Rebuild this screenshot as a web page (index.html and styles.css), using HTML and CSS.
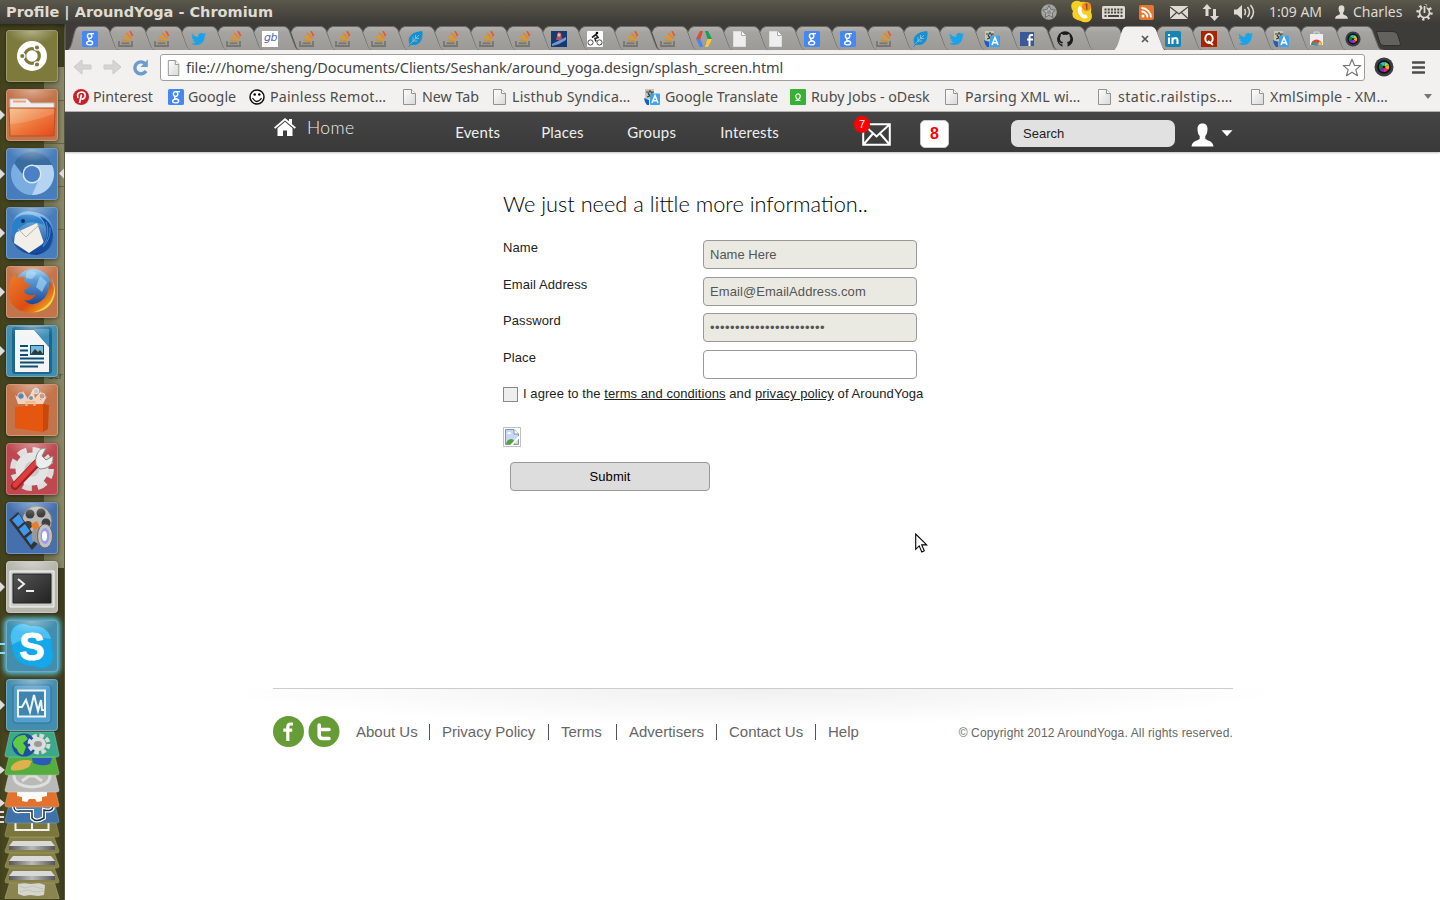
FILE: index.html
```html
<!DOCTYPE html>
<html lang="en">
<head>
<meta charset="utf-8">
<title>Profile | AroundYoga</title>
<link rel="stylesheet" href="styles.css">
</head>
<body>
<svg class="defs" aria-hidden="true">
  <defs>
    <linearGradient id="gTab" x1="0" y1="0" x2="0" y2="1"><stop offset="0" stop-color="#b3b2af"/><stop offset=".25" stop-color="#a5a4a1"/><stop offset="1" stop-color="#9b9a97"/></linearGradient>
    <linearGradient id="gPage" x1="0" y1="0" x2="1" y2="1"><stop offset="0" stop-color="#fff"/><stop offset="1" stop-color="#d8d8d8"/></linearGradient>
    <linearGradient id="gFolder" x1="0" y1="0" x2="1" y2="1"><stop offset="0" stop-color="#f6bd84"/><stop offset=".5" stop-color="#ee7a3c"/><stop offset="1" stop-color="#e6471a"/></linearGradient>
    <linearGradient id="gBlue" x1="0" y1="0" x2="0" y2="1"><stop offset="0" stop-color="#7fc0f0"/><stop offset="1" stop-color="#103f8e"/></linearGradient>
    <linearGradient id="gFox" x1="0" y1="0" x2="1" y2="1"><stop offset="0" stop-color="#ef7d2c"/><stop offset=".6" stop-color="#d94e12"/><stop offset="1" stop-color="#f8c52c"/></linearGradient>
    <linearGradient id="gDrive" x1="0" y1="0" x2="1" y2="0"><stop offset="0" stop-color="#555"/><stop offset=".5" stop-color="#bbb"/><stop offset="1" stop-color="#555"/></linearGradient>
    <linearGradient id="gTerm" x1="0" y1="0" x2="1" y2="1"><stop offset="0" stop-color="#555"/><stop offset="1" stop-color="#222"/></linearGradient>
  </defs>
  <symbol id="tabFirst" viewBox="0 0 54 24"><path d="M0 24C5 21 5 5 9 1.5Q10 .5 12 .5H36Q39 .5 41 4L47 20Q48 24 52 24Z" fill="url(#gTab)"/><path d="M0 24C5 21 5 5 9 1.5Q10 .5 12 .5H36Q39 .5 41 4L47 20Q48 24 52 24" fill="none" stroke="#6b6a67"/></symbol>
  <symbol id="tabMid" viewBox="0 0 54 24"><path d="M16 24Q12 24 11 20L6 6Q8 .5 12 .5H36Q39 .5 41 4L47 20Q48 24 52 24Z" fill="url(#gTab)"/><path d="M6 6Q8 .5 12 .5H36Q39 .5 41 4L47 20Q48 24 52 24" fill="none" stroke="#6b6a67"/></symbol>
  <symbol id="tabOn" viewBox="0 0 54 25"><path d="M-2 25C5 21 5 5 9 1.5Q10 .5 12 .5H36Q39 .5 41 4L47 20Q48 25 53 25Z" fill="#f2f1f0"/></symbol>
  <symbol id="so" viewBox="0 0 16 16"><path d="M1 10v5h13v-5" fill="none" stroke="#777672" stroke-width="1.8"/><path d="M3.5 12.3h8" stroke="#777672" stroke-width="1.8"/><path d="M4 9.2l8 1.2" stroke="#c5923d" stroke-width="1.8"/><path d="M5 5.3l7.2 3.6" stroke="#e6951c" stroke-width="1.8"/><path d="M8 1.8l5.4 5.6" stroke="#ef8220" stroke-width="1.8"/><path d="M12 0l2.7 5" stroke="#e8562a" stroke-width="1.6"/></symbol>
  <symbol id="goog" viewBox="0 0 16 16"><rect width="16" height="16" rx="1.5" fill="#4787f3"/><g fill="none" stroke="#fff" stroke-width="1.4"><ellipse cx="7.6" cy="5" rx="2.2" ry="2.4"/><path d="M8 2.6h4M7.5 7.6q-2 1.3.5 2.2 3 .8 2.6 2.6-.6 1.6-3.2 1.500-2.700-.2-2.800-1.600 0-2 3.400-2.200"/></g></symbol>
  <symbol id="bird" viewBox="0 0 16 16"><path d="M2 2.800c2 2.200 4 3.200 6.200 3.300-.4-2.500 1-4.200 3-4.200 1 0 1.700.3 2.300.9l2-.7-.9 1.700 1.600-.4-1.500 1.600C14.700 9.800 11.800 13.800 7 13.900c-2.200 0-4-.5-5.600-1.500 1.800.1 3.400-.4 4.600-1.300-1.500-.1-2.600-1-3-2.200h1.300C2.800 8.300 1.900 7.200 1.900 5.700l1.300.4C1.900 5 1.400 4 2 2.800z" fill="#1ba3e8"/></symbol>
  <symbol id="leaf" viewBox="0 0 16 16"><path d="M3 13C0 6 5 1.500 15 .6c.6 9-3 14.500-11 12.600L1.500 15.700" fill="#1590d2" stroke="#1590d2"/><path d="M3.500 12.700L12 4M6 10V6M8.500 7.500V4M6 10h4M8.500 7.500H12" stroke="#9fc0cf" stroke-width=".8" fill="none"/></symbol>
  <symbol id="doc" viewBox="0 0 16 16"><path d="M1.500.5h8l4 4v11h-12z" fill="url(#gPage)" stroke="#929292"/><path d="M9.500.5v4h4" fill="#fff" stroke="#929292"/></symbol>
  <symbol id="docTab" viewBox="0 0 16 16"><path d="M1.500.5h8l4 4v11h-12z" fill="#eee" stroke="#ddd"/><path d="M9.500.5v4h4" fill="#fff" stroke="#aaa"/></symbol>
  <symbol id="trans" viewBox="0 0 16 16"><rect x="1" y="0" width="9" height="10" fill="#c9c7b4"/><path d="M2 3h8M6 1v2M3 8q5-1 5-5M4 4q1 3 5 4" stroke="#3a3a38" stroke-width="1.200" fill="none"/><path d="M0 9l5 2v5H3l-2-3z" fill="#1660c4"/><rect x="6" y="4.500" width="10" height="11.500" rx="1" fill="#3fa2ea"/><path d="M8 14l3-7.500 3 7.500M9 11.700h4" stroke="#fff" stroke-width="1.500" fill="none"/></symbol>
  <symbol id="cam" viewBox="0 0 20 20"><circle cx="10" cy="10" r="9.500" fill="#3a3d43"/><circle cx="10" cy="10" r="6.800" fill="#111"/><path d="M10 10L6 6.500Q8 4.500 11 5z" fill="#20c0e8"/><path d="M10 10l1-5q3 1 4 3z" fill="#8be02e"/><path d="M10 10l5-2q1 3-1 5z" fill="#f6a51e"/><path d="M10 10l4 3q-2 2.500-4 2z" fill="#e2267b"/><path d="M10 10v5q-3 0-4.500-2z" fill="#7a2bd0"/><path d="M10 10l-4.500 3Q4 9 6 6.500z" fill="#17803c"/><circle cx="10" cy="10" r="1.300" fill="#181818"/></symbol>
  <symbol id="person" viewBox="0 0 22 24"><path d="M6 6C6 2 8 .5 11 .5S16 2 16 6c0 4-1.200 6-2.200 7v3c2.500 1.800 7.700 2 8.200 7.500H0c.5-5.500 5.700-5.700 8.200-7.500v-3C7.200 12 6 10 6 6z" fill="currentColor"/></symbol>
</svg>

<header class="panel">
  <span class="panel-title">Profile | AroundYoga - Chromium</span>
  <div class="tray">
    <svg class="t-star" width="16" height="16" viewBox="0 0 16 16"><circle cx="8" cy="8" r="7.800" fill="#a3a3a1"/><path d="M8 1.500l2 4 4.300.6-3.200 3 .9 4.400-4-2.200-4 2.200.9-4.400-3.200-3L6 5.500z" fill="#b5b5b3" stroke="#666" stroke-width=".9"/><circle cx="8" cy="8.300" r="2.200" fill="#8f8f8d"/></svg>
    <svg class="t-skype" width="24" height="24" viewBox="0 0 24 24"><path d="M2 3Q6-1 11 2q12-2 10 10 3 7-3 10-5 1-7-1Q0 19 3 11 0 7 2 3z" fill="#f7cf20"/><path d="M11 7q-3 3 0 7 2 4 6 2" stroke="#fff" stroke-width="3.600" fill="none"/><circle cx="16.500" cy="6.500" r="4.500" fill="#f18b1c"/><path d="M15.500 5l1.300-1v5.500" stroke="#633" fill="none"/></svg>
    <svg class="t-key" width="23" height="13" viewBox="0 0 23 13"><rect width="23" height="13" rx="1.500" fill="#dfdbd2"/><path d="M2.500 3.500h18M2.500 6.500h18" stroke="#45443e" stroke-width="2" stroke-dasharray="2 1.200"/><path d="M2.500 10h2M6 10h11M18.500 10h2" stroke="#45443e" stroke-width="1.800"/></svg>
    <svg class="t-rss" width="15" height="15" viewBox="0 0 15 15"><rect width="15" height="15" rx="2" fill="#e8762c"/><circle cx="4" cy="11" r="1.500" fill="#fff"/><path d="M2.500 6.500a6 6 0 0 1 6 6M2.500 3a9.500 9.500 0 0 1 9.500 9.500" fill="none" stroke="#fff" stroke-width="1.800"/></svg>
    <svg class="t-mail" width="18" height="13" viewBox="0 0 18 13"><rect width="18" height="13" fill="#dfdbd2"/><path d="M0 1l9 7 9-7M0 12.500L6.500 6.500M18 12.500L11.500 6.500" fill="none" stroke="#45443e" stroke-width="1.200"/></svg>
    <svg class="t-net" width="18" height="17" viewBox="0 0 18 17"><path d="M5 0l4.500 5H6.500v7h-3V5H.5zM12.500 17L8 12h3V5h3v7h3z" fill="#dfdbd2"/></svg>
    <svg class="t-vol" width="21" height="16" viewBox="0 0 21 16"><path d="M0 5.500h3L8 1v14l-5-4.500H0z" fill="#dfdbd2"/><path d="M10.500 5q2 3 0 6M13.500 3q4 5 0 10M16.500 1q6 7 0 14" fill="none" stroke="#dfdbd2" stroke-width="1.500"/></svg>
    <span class="clock">1:09 AM</span>
    <svg class="t-user" width="13" height="14"><use href="#person"/></svg>
    <span class="user">Charles</span>
    <svg class="t-gear" width="17" height="17" viewBox="0 0 17 17"><circle cx="8.500" cy="8.500" r="6.800" fill="none" stroke="#dfdbd2" stroke-width="2.800" stroke-dasharray="2.200 3.140"/><circle cx="8.500" cy="8.500" r="5" fill="none" stroke="#dfdbd2" stroke-width="1.700"/><path d="M8.500 1v8" stroke="#45443e" stroke-width="4"/><path d="M8.500 2v7" stroke="#dfdbd2" stroke-width="1.800"/></svg>
  </div>
</header>

<div class="desk">
  <aside class="dock">
    <div class="ghost"><i></i><i></i><i></i><i></i><b>Scr</b></div>
    <ul class="tiles">
      <li class="tile olive"><svg viewBox="0 0 52 52"><circle cx="26" cy="26" r="15" fill="#fff"/><circle cx="26" cy="26" r="7.300" fill="none" stroke="#7d7a3c" stroke-width="3.200"/><g stroke="#fff" stroke-width="1.200" fill="#7d7a3c"><circle cx="16.300" cy="26" r="2.700"/><circle cx="31" cy="17.500" r="2.700"/><circle cx="31" cy="34.500" r="2.700"/></g></svg></li>
      <li class="tile orange run"><svg viewBox="0 0 52 52"><path d="M4 10h17l4 4h23v9H4z" fill="#eee" stroke="#c9c0b8"/><path d="M7 12.500h13" stroke="#f0a070" stroke-width="2"/><path d="M3 19h46l-1 28H4z" fill="url(#gFolder)" stroke="#b5522a"/><path d="M4 35Q22 34 48 25V20H4z" fill="#fff" opacity=".15"/></svg></li>
      <li class="tile blue run focus"><svg viewBox="0 0 52 52"><circle cx="26" cy="26" r="21" fill="#7aaee0"/><path d="M26 17h20A21 21 0 0 0 8 15l9 12z" fill="#3a6c9f"/><path d="M26 17h20a21 21 0 0 1-20 30l8-18z" fill="#b4d4f1"/><circle cx="26" cy="26" r="9.500" fill="#dbe9f7"/><circle cx="26" cy="26" r="8" fill="#4a80c6"/><path d="M58 20.500v10L53 25.500z" fill="#ddd"/></svg></li>
      <li class="tile blue run"><svg viewBox="0 0 52 52"><path d="M8 12Q14 2 28 5 46 8 48 26 48 44 31 48 10 47 5 31 4 20 8 12z" fill="url(#gBlue)"/><path d="M9 26l22-10 7 20-15 10-15-10z" fill="#f1efe8"/><path d="M12 22l8 8 13-12" fill="none" stroke="#b9b3a4"/><path d="M8 13q10-9 24-3 5 3 6 8-9-4-17-2l-9 6-4 8q-5-9 0-17z" fill="#2b7ec9"/><path d="M34 9q10 12 5 24-5 9-14 13 21 1 22-19Q46 14 34 9z" fill="#174b9d"/><path d="M40 15q5 12-3 24M44 20q1 12-7 20" fill="none" stroke="#3f8fd8"/><circle cx="17" cy="14" r="2" fill="#183152"/></svg></li>
      <li class="tile orange run"><svg viewBox="0 0 52 52"><circle cx="27" cy="22" r="19" fill="url(#gBlue)"/><path d="M20 7q5-4 11 0l-5 6-6-1zM34 10l7 6-5 10-6-5z" fill="#9dd3f2" opacity=".7"/><path d="M4 18q1-7 5-10 0 3 2 4 5-2 8-1l-1 5 7 3-5 4q-3 1-1 4 5 4 11 1-4 8-12 6 8 8 17 1 9-6 8-20 6 6 3 16-5 15-19 16Q8 46 4 34 1 26 4 18z" fill="url(#gFox)"/><path d="M45 11q6 12 0 23-6 9-17 12 18-1 21-19 0-9-4-16z" fill="#f9d442"/></svg></li>
      <li class="tile teal run"><svg viewBox="0 0 52 52"><rect x="6" y="2" width="40" height="47" rx="3" fill="#1c6790"/><path d="M9 5h19l15 17v25H9z" fill="#f2f4f5"/><path d="M28 4l15 18V4z" fill="#3f8fb8"/><path d="M14 21h8M14 25.500h8M14 30h8M14 33.500h24M14 37.500h24M14 41.500h18" stroke="#0d4d72" stroke-width="2"/><rect x="24.500" y="20.500" width="13" height="9" fill="#79b9dc" stroke="#0d4d72"/><path d="M25 29l4-5 3 3 2-2 3 4z" fill="#2b3d33"/></svg></li>
      <li class="tile orange"><svg viewBox="0 0 52 52"><path d="M12 20L9 11l6 5 2-9 5 8 5-10 2 9 6-7-1 9 7-4-4 8z" fill="#fbe0cc" opacity=".85"/><g stroke="#eee" stroke-width=".8"><circle cx="15" cy="12" r="3.300" fill="#5b83ad"/><circle cx="30" cy="7" r="2.800" fill="#b9bcbe"/><circle cx="36" cy="12" r="3" fill="#c9987f"/><circle cx="25" cy="14" r="2.500" fill="#7c8e9b"/></g><path d="M9 23l28-3v28l-28-4z" fill="#e5560f"/><path d="M37 20l6 1-1 24-5 3z" fill="#c8480c"/><path d="M20.500 22v-4h8v4" fill="none" stroke="#f7b888" stroke-width="2"/></svg></li>
      <li class="tile red"><svg viewBox="0 0 52 52"><circle cx="26" cy="26" r="19" fill="none" stroke="#dcdcdc" stroke-width="6" stroke-dasharray="9 5.920"/><circle cx="26" cy="26" r="12" fill="#c9c9c9" stroke="#e4e4e4" stroke-width="9"/><path d="M9 43l22-23" stroke="#a81e20" stroke-width="8" stroke-linecap="round"/><path d="M9 42l21-22" stroke="#dc3e3f" stroke-width="5" stroke-linecap="round"/><path d="M30 22q-2-10 5-16l5-1-4 8 4 4 7-4q1 9-7 12-4 1-6 1z" fill="#ededed" stroke="#888"/></svg></li>
      <li class="tile indigo"><svg viewBox="0 0 52 52"><circle cx="31" cy="19" r="15" fill="#b9b9b7" stroke="#777"/><g fill="#3f3f3f"><circle cx="24" cy="12" r="4.500"/><circle cx="35" cy="11" r="4.500"/><circle cx="40" cy="21" r="4.500"/><circle cx="22" cy="23" r="4"/></g><path d="M3 18l9-8 21 30-7 8z" fill="#333"/><path d="M6 18l7-6 5 8-6 5zM13 27l6-5 5 7-6 5zM20 36l6-5 4 6-5 6z" fill="#3f97ec"/><path d="M25 22l6-3 3 7-6 3z" fill="#ef7b27"/><path d="M26 29l11-6v22l-11-7z" fill="#999"/><ellipse cx="39" cy="34" rx="7.500" ry="12" fill="#c2c2c2" stroke="#666"/><ellipse cx="39" cy="34" rx="4.500" ry="8" fill="#9a9ae8"/><ellipse cx="38.500" cy="34" rx="2.500" ry="5" fill="#fff"/></svg></li>
      <li class="tile grey run"><svg viewBox="0 0 52 52"><path d="M4 10h44v36H4z" fill="#ccc" stroke="#f7f7f7"/><path d="M7 13h38v29H7z" fill="url(#gTerm)" stroke="#222"/><path d="M12 18l6 5-6 5M20 30h8" fill="none" stroke="#eee" stroke-width="2"/></svg></li>
      <li class="tile teal glow run2"><svg viewBox="0 0 52 52"><path d="M6 8Q14 0 24 6 46 4 46 28 50 44 38 48 32 48 29 46 6 46 6 24 3 15 6 8z" fill="#12a8ea"/><path d="M7 9Q14 1 24 6 42 5 45 19 22 14 6 25 3 15 7 9z" fill="#6fd0f6" opacity=".6"/><text x="26" y="40" class="skype-s">S</text></svg></li>
      <li class="tile teal run"><svg viewBox="0 0 52 52"><rect x="7" y="6" width="38" height="38" rx="3" fill="#569fcc" stroke="#2c7098"/><rect x="12" y="11.500" width="27" height="26" fill="#3f85af" stroke="#eaf6fc" stroke-width="2"/><path d="M13 28h3l4-7 4 12 4-17 4 16 3-11 1 10h3" fill="none" stroke="#eaf6fc" stroke-width="2"/></svg></li>
    </ul>
    <svg class="folded" width="65" height="168" viewBox="0 0 65 168">
      <g stroke-opacity=".5">
        <path d="M10 150.500h44l5 16q0 2-2 2H7q-2 0-2-2z" fill="#8a8450" stroke="#b5b080"/>
        <path d="M18 153l6-1 7 1 8-1 6 2-1 10-6 1-8-1-6 1-6-2z" fill="#d5d5cd"/><path d="M19 155l6 2 8-2 10 3M20 161l8-2 7 2 9-1" fill="none" stroke="#b0afa2"/>
        <path d="M10 136h44l5 14q0 2-2 2H7q-2 0-2-2z" fill="#85804a" stroke="#a9a46e"/>
        <path d="M10 121h44l5 14q0 2-2 2H7q-2 0-2-2z" fill="#85804a" stroke="#a9a46e"/>
        <path d="M10 106h44l5 14q0 2-2 2H7q-2 0-2-2z" fill="#85804a" stroke="#a9a46e"/>
        <path d="M10 84h44l5 20q0 2-2 2H7q-2 0-2-2z" fill="#7b763c" stroke="#a9a46e"/>
        <path d="M15.500 89v10h33V89M32 89v9" fill="none" stroke="#fff" stroke-width="2" stroke-opacity=".9"/>
        <path d="M10 70h44l5 20q0 2-2 2H7q-2 0-2-2z" fill="#3e72a8" stroke="#7ba0c6"/>
        <path d="M14 76q0 5 6 4l12 0v7q4 5 12 0v-8q8 2 9-3" fill="#4c82b8" stroke="#fff" stroke-width="4" stroke-opacity="1"/><path d="M14 76q0 5 6 4l12 0v7q4 5 12 0v-8q8 2 9-3" fill="none" stroke="#17334f" stroke-width="1.500" stroke-opacity="1"/>
        <path d="M10 54h44l5 20q0 2-2 2H7q-2 0-2-2z" fill="#e2722c" stroke="#f2a878"/>
        <path d="M17 60h30v5l-5 1v4l-5 1-2-3h-6l-2 3-5-1v-4l-5-1z" fill="#fff"/>
        <path d="M10 38h44l5 21q0 2-2 2H7q-2 0-2-2z" fill="#b9b9b7" stroke="#ddd"/>
        <path d="M14 43q-1 12 18 13 19-1 18-13M22 50l7-5h6l7 5" fill="none" stroke="#dedede" stroke-width="3" stroke-opacity="1"/>
        <path d="M10 22h44l5 20q0 2-2 2H7q-2 0-2-2z" fill="#54ad3e" stroke="#94d084"/>
        <path d="M11 36q5-8 17-7l4 1-3 6q-10 5-18 3z" fill="#e0b04a"/><path d="M32 27h20l-2 6q-8 3-17-1z" fill="#2b59b8"/>
        <path d="M10 1h44l5 23q0 2-2 2H7q-2 0-2-2z" fill="#3ba889" stroke="#84d4bc"/>
      </g>
      <ellipse cx="24" cy="14" rx="12" ry="11.500" fill="#1c4f9c"/><path d="M13 11q4-8 12-7l3 4-5 4 3 4-3 8q-5-1-6-6-4-2-4-7z" fill="#5ecb42"/>
      <ellipse cx="39" cy="13" rx="9.500" ry="8.500" fill="none" stroke="#dadada" stroke-width="4" stroke-dasharray="4.500 2.600"/><ellipse cx="38" cy="13" rx="6" ry="5" fill="#999" stroke="#dcdcdc" stroke-width="4"/>
      <g id="drive"><path d="M13 110h38l4 5H9z" fill="#d9d9d7"/><path d="M9 115h46v4H9z" fill="url(#gDrive)"/></g>
      <use href="#drive" y="15"/><use href="#drive" y="30"/>
      <path d="M0 35l5 4-5 4zM0 68l5 4-5 4z" fill="#ddd"/><path d="M0 81h4M0 86h4M0 91h4" stroke="#ddd" stroke-width="2"/>
    </svg>
  </aside>

  <section class="browser">
    <ol class="tabs">
      <li class="tab"><svg class="shape"><use href="#tabFirst"/></svg><svg class="fav"><use href="#goog"/></svg></li>
      <li class="tab"><svg class="shape"><use href="#tabMid"/></svg><svg class="fav"><use href="#so"/></svg></li>
      <li class="tab"><svg class="shape"><use href="#tabMid"/></svg><svg class="fav"><use href="#so"/></svg></li>
      <li class="tab"><svg class="shape"><use href="#tabMid"/></svg><svg class="fav"><use href="#bird"/></svg></li>
      <li class="tab"><svg class="shape"><use href="#tabMid"/></svg><svg class="fav"><use href="#so"/></svg></li>
      <li class="tab"><svg class="shape"><use href="#tabMid"/></svg><span class="fav gb">gb</span></li>
      <li class="tab"><svg class="shape"><use href="#tabMid"/></svg><svg class="fav"><use href="#so"/></svg></li>
      <li class="tab"><svg class="shape"><use href="#tabMid"/></svg><svg class="fav"><use href="#so"/></svg></li>
      <li class="tab"><svg class="shape"><use href="#tabMid"/></svg><svg class="fav"><use href="#so"/></svg></li>
      <li class="tab"><svg class="shape"><use href="#tabMid"/></svg><svg class="fav"><use href="#leaf"/></svg></li>
      <li class="tab"><svg class="shape"><use href="#tabMid"/></svg><svg class="fav"><use href="#so"/></svg></li>
      <li class="tab"><svg class="shape"><use href="#tabMid"/></svg><svg class="fav"><use href="#so"/></svg></li>
      <li class="tab"><svg class="shape"><use href="#tabMid"/></svg><svg class="fav"><use href="#so"/></svg></li>
      <li class="tab"><svg class="shape"><use href="#tabMid"/></svg><svg class="fav" viewBox="0 0 16 16"><path fill="#163a72" d="M0 0h16v16H0z"/><path d="M1 13l6-3 8-4v3l-7 4-7 2z" fill="#6f9bd0"/><path d="M5 9l2-8 3 1 1 7z" fill="#c44a55"/><circle cx="8" cy="4" r="1.700" fill="#e8b5a0"/></svg></li>
      <li class="tab"><svg class="shape"><use href="#tabMid"/></svg><svg class="fav" viewBox="0 0 16 16"><rect width="16" height="16" rx="1" fill="#fff"/><g fill="none" stroke="#222"><circle cx="3.500" cy="11.500" r="2.600" stroke-width=".8"/><circle cx="12.500" cy="11.500" r="2.600" stroke-width=".8"/><path d="M5 6.500l4-3 2 3-3 1 1 3" stroke-width="1.600"/></g><circle cx="10" cy="2" r="1.300"/></svg></li>
      <li class="tab"><svg class="shape"><use href="#tabMid"/></svg><svg class="fav"><use href="#so"/></svg></li>
      <li class="tab"><svg class="shape"><use href="#tabMid"/></svg><svg class="fav"><use href="#so"/></svg></li>
      <li class="tab"><svg class="shape"><use href="#tabMid"/></svg><svg class="fav" viewBox="0 0 16 16"><path d="M0 8l4-8h3L4.500 8z" fill="#dd4b39"/><path d="M0 8h4.500L7 16H4z" fill="#4a86e8"/><path d="M16 8h-4.500L9 0h3z" fill="#1a9f59"/><path d="M16 8l-4 8H9l2.500-8z" fill="#fbc835"/></svg></li>
      <li class="tab"><svg class="shape"><use href="#tabMid"/></svg><svg class="fav"><use href="#docTab"/></svg></li>
      <li class="tab"><svg class="shape"><use href="#tabMid"/></svg><svg class="fav"><use href="#docTab"/></svg></li>
      <li class="tab"><svg class="shape"><use href="#tabMid"/></svg><svg class="fav"><use href="#goog"/></svg></li>
      <li class="tab"><svg class="shape"><use href="#tabMid"/></svg><svg class="fav"><use href="#goog"/></svg></li>
      <li class="tab"><svg class="shape"><use href="#tabMid"/></svg><svg class="fav"><use href="#so"/></svg></li>
      <li class="tab"><svg class="shape"><use href="#tabMid"/></svg><svg class="fav"><use href="#leaf"/></svg></li>
      <li class="tab"><svg class="shape"><use href="#tabMid"/></svg><svg class="fav"><use href="#bird"/></svg></li>
      <li class="tab"><svg class="shape"><use href="#tabMid"/></svg><svg class="fav"><use href="#trans"/></svg></li>
      <li class="tab"><svg class="shape"><use href="#tabMid"/></svg><svg class="fav" viewBox="0 0 16 16"><path fill="#3b5998" d="M0 1h14v14H0z"/><path d="M9.500 15V6q0-2 2-2H13M7 8.500h6" stroke="#fff" stroke-width="2" fill="none"/></svg></li>
      <li class="tab"><svg class="shape"><use href="#tabMid"/></svg><svg class="fav" viewBox="0 0 16 16"><path d="M8 .3a7.900 7.900 0 0 0-2.500 15.400V13.400c-2 .4-2.600-1-2.900-1.700-.3-.5-1-1-1-1 1-.3 1.600.8 2 1.300.5.600 1.300.5 1.900.2.100-.5.300-.9.600-1.100C4 10.800 3 10 3 7.500c0-.9.300-1.600.8-2.200-.2-.7-.1-1.500.2-2.200 1 0 1.700.5 2.300.9a8 8 0 0 1 3.800 0c.6-.4 1.400-.9 2.300-.9.200.7.300 1.500.1 2.200.5.600.8 1.300.8 2.200 0 2.500-1.300 3.400-3.300 3.600.4.300.6.900.6 1.700v2.900A7.900 7.900 0 0 0 8 .3z" fill="#1b1b1b"/></svg></li>
      <li class="tab"><svg class="shape"><use href="#tabMid"/></svg></li>
      <li class="tab active"><svg class="shape"><use href="#tabOn"/></svg><svg class="close" viewBox="0 0 8 8"><path d="M1 1l6 6M7 1L1 7" stroke="#555" stroke-width="1.700"/></svg></li>
      <li class="tab"><svg class="shape"><use href="#tabMid"/></svg><svg class="fav" viewBox="0 0 16 16"><rect width="16" height="16" rx="2" fill="#1684b5"/><path d="M4 6.500V13M4 3v2M7.500 13V6.500M7.500 9q1-2 3-2 2 .2 2 2.500V13" fill="none" stroke="#fff" stroke-width="2.100"/></svg></li>
      <li class="tab"><svg class="shape"><use href="#tabMid"/></svg><svg class="fav" viewBox="0 0 16 16"><path fill="#a82400" d="M0 0h16v16H0z"/><ellipse cx="8" cy="7.500" rx="3.700" ry="4.500" fill="none" stroke="#fff" stroke-width="2"/><path d="M7 10l5 4" stroke="#fff" stroke-width="1.800"/></svg></li>
      <li class="tab"><svg class="shape"><use href="#tabMid"/></svg><svg class="fav"><use href="#bird"/></svg></li>
      <li class="tab"><svg class="shape"><use href="#tabMid"/></svg><svg class="fav"><use href="#trans"/></svg></li>
      <li class="tab"><svg class="shape"><use href="#tabMid"/></svg><svg class="fav" viewBox="0 0 16 16"><path d="M1 3h13v11H1z" fill="#eee"/><path d="M5 3V1h5v2" fill="none" stroke="#ddd"/><path d="M2 14a5.500 5.500 0 0 1 11 0z" fill="#e0402f"/><path d="M2 14l2.500-4 3 4z" fill="#2ba24c"/><path d="M13 14l-2-4-3 4z" fill="#f9c927"/><circle cx="7.500" cy="13" r="2" fill="#4a86e8"/></svg></li>
      <li class="tab"><svg class="shape"><use href="#tabMid"/></svg><svg class="fav"><use href="#cam"/></svg></li>
      <li class="newtab"><svg width="27" height="15" viewBox="0 0 27 15"><path d="M1 .5h16q3 0 4.500 3l3 9q.5 2-2 2H8q-3 0-4-2.500L.8 2Q.5.500 1 .5z" fill="#64625e" stroke="#302f2c"/></svg></li>
    </ol>

    <div class="toolbar">
      <svg class="arrow" width="20" height="16" viewBox="0 0 20 16"><path d="M1 8l8-7v5h9v4H9v5z" fill="#d6d5d3" stroke="#cac9c7" stroke-linejoin="round"/></svg>
      <svg class="arrow" width="20" height="16" viewBox="0 0 20 16"><path d="M19 8l-8-7v5H2v4h9v5z" fill="#d6d5d3" stroke="#cac9c7" stroke-linejoin="round"/></svg>
      <svg class="reload" width="17" height="17" viewBox="0 0 17 17"><path d="M13 4.500a6 6 0 1 0 1 7.500" fill="none" stroke="#6b9ccb" stroke-width="3.400"/><path d="M15.800.5V8H8.500z" fill="#6b9ccb"/></svg>
      <div class="omnibox">
        <svg class="pageicon" width="14" height="16" viewBox="0 0 16 16" preserveAspectRatio="none"><use href="#doc"/></svg>
        <span class="url">file:///home/sheng/Documents/Clients/Seshank/around_yoga.design/splash_screen.html</span>
        <svg class="star" width="20" height="19" viewBox="0 0 20 19"><path d="M10 1.300l2.400 6 6.300.3-4.900 4 1.700 6.100L10 14.300l-5.500 3.400 1.700-6.100-4.900-4 6.300-.3z" fill="#fff" stroke="#777" stroke-width="1.200" stroke-linejoin="round"/></svg>
      </div>
      <svg class="ext" width="20" height="20"><use href="#cam"/></svg>
      <svg class="menu" width="13" height="13" viewBox="0 0 13 13"><path d="M1 1.500h11M1 6.500h11M1 11.500h11" stroke="#4c4c4c" stroke-width="2.600" stroke-linecap="round"/></svg>
    </div>

    <div class="bookmarks">
      <a class="bm"><svg class="bi" viewBox="0 0 16 16"><circle cx="8" cy="8" r="8" fill="#cb2027"/><path d="M5 9Q3 3.500 8.500 3q4.500.5 3.500 4.500-1 3-3.500 2.500M8.500 5.500L6.500 14" fill="none" stroke="#fff" stroke-width="1.700"/></svg><span>Pinterest</span></a>
      <a class="bm"><svg class="bi"><use href="#goog"/></svg><span>Google</span></a>
      <a class="bm"><svg class="bi" viewBox="0 0 16 16"><circle cx="8" cy="8" r="7" fill="#fff" stroke="#111" stroke-width="1.500"/><path d="M3.500 9q4.500 7 9 0" fill="none" stroke="#111" stroke-width="1.300"/><circle cx="5.700" cy="5.500" r="1.300"/><circle cx="10.300" cy="5.500" r="1.300"/></svg><span class="wide inset">Painless Remot…</span></a>
      <a class="bm"><svg class="bi"><use href="#doc"/></svg><span>New Tab</span></a>
      <a class="bm"><svg class="bi"><use href="#doc"/></svg><span class="wide">Listhub Syndica…</span></a>
      <a class="bm"><svg class="bi"><use href="#trans"/></svg><span class="inset">Google Translate</span></a>
      <a class="bm"><svg class="bi" viewBox="0 0 16 16"><rect width="16" height="16" rx="1" fill="#37b034"/><path d="M5.500 11.500h1.700v-1.500Q5.500 8.500 5.800 6.500 6.500 4.800 8 4.800T10.200 6.500Q10.500 8.500 8.800 10v1.500h1.700" fill="none" stroke="#fff" stroke-width="1.200"/></svg><span class="inset">Ruby Jobs - oDesk</span></a>
      <a class="bm"><svg class="bi"><use href="#doc"/></svg><span class="wide inset">Parsing XML wi…</span></a>
      <a class="bm"><svg class="bi"><use href="#doc"/></svg><span class="wider inset">static.railstips.…</span></a>
      <a class="bm"><svg class="bi"><use href="#doc"/></svg><span class="wide">XmlSimple - XM…</span></a>
      <svg class="more" width="8" height="5" viewBox="0 0 8 5"><path d="M0 0h8L4 5z" fill="#777"/></svg>
    </div>

    <main class="page">
      <div class="topnav">
        <div class="inner">
          <a class="home"><svg width="22" height="19" viewBox="0 0 22 19"><path d="M0 9.500L11 0l4 3.300V1h3v5l4 3.500-1.300 1.300L11 2.500 1.300 10.800z" fill="#fff"/><path d="M3.500 10.200L11 3.800l7.500 6.400V18H13v-5.500H9V18H3.500z" fill="#fff"/></svg><span>Home</span></a>
          <nav class="links"><a>Events</a><a>Places</a><a>Groups</a><a>Interests</a></nav>
          <div class="mail"><svg width="29" height="23" viewBox="0 0 29 23"><path d="M1.200 1.200h26.600v20.600H1.200zM1.500 1.500l13 12 13-12M1.500 21.500L11 10.500M27.500 21.500L18 10.500" fill="none" stroke="#fff" stroke-width="2"/></svg><span class="badge">7</span></div>
          <div class="count">8</div>
          <input class="search" type="text" value="Search">
          <svg class="avatar" width="23" height="24"><use href="#person"/></svg>
          <svg class="caret" width="12" height="7" viewBox="0 0 12 7"><path d="M.5.300h11L6 6.300z" fill="#fff"/></svg>
        </div>
      </div>

      <form class="info">
        <h1>We just need a little more information..</h1>
        <div class="row"><label>Name</label><input type="text" value="Name Here"></div>
        <div class="row"><label>Email Address</label><input class="mailbox" type="text" value="Email@EmailAddress.com"></div>
        <div class="row"><label>Password</label><input class="pw" type="text" value="•••••••••••••••••••••••"></div>
        <div class="row"><label>Place</label><input class="blank" type="text"></div>
        <div class="agree"><i class="box"></i><p>I agree to the <u>terms and conditions</u> and <u>privacy policy</u> of AroundYoga</p></div>
        <svg class="broken" width="18" height="20" viewBox="0 0 18 20"><path d="M.5.500h17v19H.5z" fill="#fff" stroke="#c0c0c0"/><path d="M2.500 2.500h8.500l4.500 4.500v10.500h-13z" fill="#c6d8f5" stroke="#8d939b"/><path d="M11 2.500V7h4.500" fill="#fff" stroke="#8d939b"/><path d="M4 7q0-2 2-2 2 0 2 2z" fill="#fff"/><path d="M3 17q1-5 6-5 3 1 3 5z" fill="#54a535"/><path d="M8 18.500l8.500-9" stroke="#fff" stroke-width="2"/></svg>
        <button class="submit" type="button">Submit</button>
      </form>

      <footer class="foot">
        <div class="social">
          <svg width="31" height="31" viewBox="0 0 31 31"><circle cx="15.500" cy="15.500" r="15.500" fill="#669c35"/><path d="M14.800 25V11q0-3 2.700-3H20M10.300 14.200h8.900" fill="none" stroke="#fff" stroke-width="3.200"/></svg>
          <svg width="32" height="31" viewBox="0 0 32 31"><circle cx="16" cy="15.500" r="15.500" fill="#669c35"/><path d="M11.200 9v10q0 3.500 3.500 3.500H21M11.200 13.500H21" fill="none" stroke="#fff" stroke-width="3.600" stroke-linecap="round"/></svg>
        </div>
        <ul class="flinks"><li>About Us</li><li>Privacy Policy</li><li>Terms</li><li>Advertisers</li><li>Contact Us</li><li>Help</li></ul>
        <p class="copy">© Copyright 2012 AroundYoga. All rights reserved.</p>
      </footer>
    </main>
  </section>
</div>
<svg class="pointer" width="13" height="20" viewBox="0 0 13 20"><path d="M.700 1v15.300l3.500-3.400 2.600 6 2.500-1.100-2.600-5.900h5z" fill="#fff" stroke="#000" stroke-width="1.100"/></svg>
</body>
</html>
```
FILE: styles.css
```css
* { box-sizing: border-box; }
body { margin: 0; width: 1440px; height: 900px; overflow: hidden; background: #fff; font-family: "Liberation Sans", Arial, sans-serif; }
ul, ol, p, h1 { margin: 0; padding: 0; list-style: none; }
svg { display: block; flex: none; }
.defs { position: absolute; width: 0; height: 0; }

.panel { display: flex; justify-content: space-between; height: 24px; padding-left: 6px; background: linear-gradient(#5b584b, #403f3a 85%, #3c3b37); color: #dfdbd2; }
.panel-title { font: bold 14.500px/24px "DejaVu Sans", sans-serif; white-space: nowrap; }
.tray { display: flex; align-items: center; width: 399px; font: 14px/24px "Noto Sans", sans-serif; white-space: nowrap; }
.t-skype { margin-left: 13px; }
.t-key { margin-left: 8px; }
.t-rss { margin-left: 14px; }
.t-mail { margin-left: 16px; }
.t-net { margin-left: 14px; }
.t-vol { margin-left: 14px; }
.clock { margin-left: 14px; width: 54px; }
.t-user { margin-left: 12px; }
.user { margin-left: 5px; width: 50px; }
.t-gear { margin-left: 13px; }

.desk { display: flex; height: 876px; }
.dock { position: relative; width: 65px; height: 876px; padding-top: 6px; background: linear-gradient(90deg, #46451f, #4b4a26 80%, #3c3b1e 98%, #77756a); box-shadow: inset 0 5px 5px -3px #25240f; overflow: hidden; }
.ghost { position: absolute; left: 44px; top: 43px; width: 20px; height: 501px; display: flex; flex-direction: column; gap: 42px; padding-top: 33px; background: linear-gradient(90deg, #747350, #8b8967); }
.ghost i { display: block; height: 1px; background: #666443; }
.ghost b { margin: 98px 0 0 4px; font: 9px/12px "DejaVu Sans", sans-serif; color: #494829; }
.tiles { position: relative; display: flex; flex-direction: column; gap: 7px; padding-left: 6px; }
.tile { position: relative; width: 52px; height: 52px; border-radius: 4px; border: 1px solid rgba(255,255,255,.25); box-shadow: 0 1px 4px rgba(0,0,0,.5); }
.tile svg { width: 52px; height: 52px; margin: -1px; }
.tile::before { content: ""; position: absolute; inset: 0 0 auto; height: 13px; background: radial-gradient(ellipse at 50% 0, rgba(255,255,255,.4), transparent 70%); }
.olive { background: #7d7a3c; }
.orange { background: #c4744b; }
.blue { background: #467dba; }
.teal { background: #438dae; }
.red { background: #bd4850; }
.indigo { background: #4670ad; }
.grey { background: #b7b6ad; }
.glow { box-shadow: 0 0 5px 2px #53c5e8; }
.skype-s { font: bold 38px "Liberation Sans", sans-serif; fill: #fff; stroke: #fff; stroke-width: 1px; text-anchor: middle; }
.run::after { content: ""; position: absolute; left: -7px; top: 20px; border: 5px solid transparent; border-left-color: #ddd; border-right: 0; }
.run2::after { content: ""; position: absolute; left: -7px; top: 22px; width: 5px; height: 7px; border: 2px solid #8fd9f2; border-width: 2px 0; }
.focus svg { overflow: visible; }
.folded { position: relative; }

.browser { width: 1375px; display: flex; flex-direction: column; }
.tabs { position: relative; display: flex; height: 26px; padding: 2px 0 0 3px; background: #3d3c38; border-left: 1px solid #55534d; }
.tab { position: relative; flex: none; width: 36.100px; height: 24px; padding: 5px 0 0 14px; }
.tabs .tab:first-child { margin-left: -1px; }
.shape { position: absolute; left: 0; top: 0; width: 54px; height: 24px; overflow: visible; }
.fav { position: relative; width: 16px; height: 16px; }
.gb { display: block; background: #fff; color: #5566aa; font: italic 11px/14px "DejaVu Sans", sans-serif; letter-spacing: -.5px; text-align: center; }
.active { z-index: 2; }
.active .shape { height: 25px; }
.close { position: relative; width: 8px; height: 8px; margin: 4px 0 0 12px; }
.newtab { padding: 5px 0 0 9px; }

.toolbar { display: flex; align-items: center; height: 34px; padding-left: 8px; background: #f2f1f0; }
.arrow { margin-right: 9px; }
.reload { margin-left: 1px; }
.omnibox { display: flex; align-items: center; width: 1205px; height: 27px; margin: 1px 0 0 11px; padding: 0 2px 0 6px; border: 1px solid #a09e9a; border-radius: 3px; background: #fff; }
.url { flex: 1; margin: -2px 0 0 5px; font: 14.500px/26px "Noto Sans", sans-serif; color: #444; letter-spacing: -.09px; white-space: nowrap; }
.ext { margin-left: 9px; }
.menu { margin-left: 18px; }

.bookmarks { position: relative; display: grid; grid-template-columns: 95px 81px 153px 90px 152px 146px 154px 153px 153px 174px 10px; align-items: center; height: 28px; padding: 0 0 2px 8px; background: #f2f1f0; border-bottom: 1px solid #b5b3b0; }
.bm { display: flex; align-items: center; gap: 4px; font: 14.250px/24px "Noto Sans", sans-serif; color: #4c4c4c; white-space: nowrap; }
.bi { width: 16px; height: 16px; }
.wide { letter-spacing: .18px; }
.wider { letter-spacing: .45px; }
.inset { margin-left: 1px; }

.page { flex: 1; position: relative; background: #fff; }
.topnav { height: 40px; background: linear-gradient(#454545, #393939); box-shadow: 0 1px 2px rgba(0,0,0,.25); }
.inner { display: flex; align-items: flex-start; width: 960px; margin-left: 208px; color: #eee; }
.home { display: flex; gap: 11px; width: 182px; padding: 5px 0 0 1px; font: 300 17.500px/21px Lato, sans-serif; letter-spacing: .4px; }
.home svg { margin-top: 1px; }
.links { display: grid; grid-template-columns: 86px 86px 93px 142px; font: 400 15px/20px Lato, sans-serif; letter-spacing: .2px; padding: 10px 0 0 1px; }
.mail { position: relative; margin-top: 11px; }
.badge { position: absolute; left: -8px; top: -7px; width: 16px; height: 17px; border-radius: 50%; background: #f00; color: #fff; font: 11px/17px "Liberation Sans", sans-serif; text-align: center; }
.count { width: 29px; height: 28px; margin: 8px 0 0 29px; border: 1px solid #ccc; border-radius: 5px; background: #fff; color: #f00; font: bold 16px/26px "Liberation Sans", sans-serif; text-align: center; }
.search { width: 164px; height: 27px; margin: 8px 0 0 62px; padding: 0 12px; border: 0; border-radius: 7px; background: #e1e1e1; font: 13px "Liberation Sans", sans-serif; color: #222; }
.avatar { margin: 11px 0 0 16px; color: #fff; }
.caret { margin: 18px 0 0 7px; }

.info { margin: 40px 0 0 438px; width: 440px; color: #222; font-size: 13px; }
.info h1 { margin-bottom: 24px; font: 300 21.750px/24px Lato, sans-serif; color: #000; white-space: nowrap; }
.row { display: flex; height: 36.600px; }
.row label { width: 200px; line-height: 16px; letter-spacing: .1px; }
.row input { width: 214px; height: 29px; padding: 1px 6px; border: 1px solid #999; border-radius: 4px; background: #eaeae3; color: #555; font: 13px "Liberation Sans", sans-serif; }
.row .mailbox { letter-spacing: .08px; }
.row .pw { letter-spacing: .450px; }
.row .blank { background: #fff; }
.agree { display: flex; gap: 5px; }
.box { width: 15px; height: 15px; margin-top: 1px; border: 1px solid #888; background: #eee; }
.agree p { line-height: 15px; letter-spacing: .07px; white-space: nowrap; }
.broken { margin-top: 25px; }
.submit { display: block; width: 200px; height: 29px; margin: 15px 0 0 7px; border: 1px solid #999; border-radius: 4px; background: #ddd; color: #000; font: 13px "Liberation Sans", sans-serif; letter-spacing: .1px; }

.foot { position: relative; display: flex; align-items: center; width: 960px; height: 87px; margin: 197px 0 0 208px; border-top: 1px solid #ccc; color: #666; }
.foot::before { content: ""; position: absolute; left: -60px; right: -60px; top: 0; height: 36px; background: radial-gradient(ellipse 50% 100% at 50% 0, #f0f0f0, #fff); }
.social, .flinks, .copy { position: relative; }
.social { display: flex; gap: 4px; margin-top: -2px; }
.flinks { display: flex; margin-left: 16px; font-size: 15px; line-height: 16px; white-space: nowrap; }
.flinks li + li { margin-left: 12px; padding-left: 12px; border-left: 1px solid #555; }
.flinks li:first-child { width: 61px; }
.flinks li:nth-child(2) { width: 107px; }
.flinks li:nth-child(3) { width: 56px; }
.flinks li:nth-child(4) { width: 88px; }
.flinks li:nth-child(5) { width: 87px; }
.copy { margin-left: auto; font-size: 12px; letter-spacing: .145px; padding-top: 2px; white-space: nowrap; }
.pointer { position: absolute; left: 915px; top: 533px; }
```
